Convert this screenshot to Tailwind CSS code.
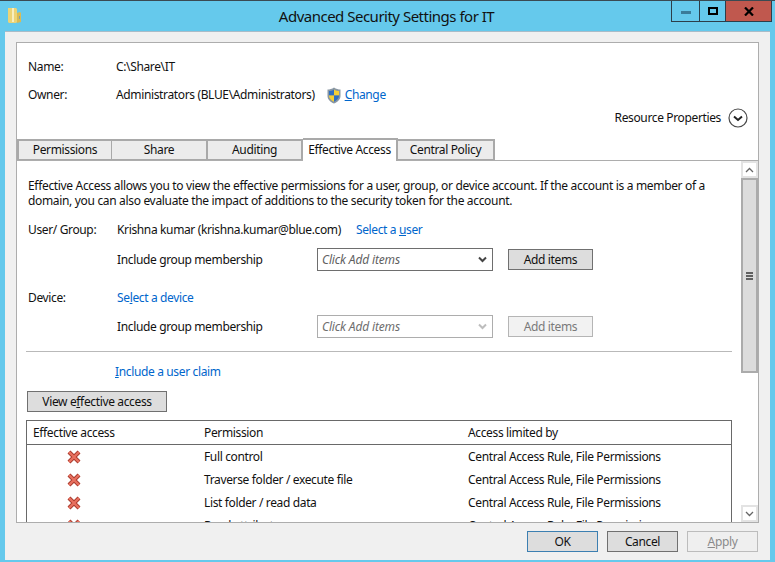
<!DOCTYPE html>
<html lang="en">
<head>
    <meta charset="UTF-8">
    <title>Advanced Security Settings for IT</title>
    <script src="https://cdn.jsdelivr.net/npm/@tailwindcss/browser@4"></script>
</head>
<body class="w-[775px] h-[562px] overflow-hidden bg-[#65c9ec] font-['Noto_Sans',sans-serif] text-[12px] leading-[16px] tracking-[-0.36px] text-[#111]">
    <!-- title bar -->
    <div class="h-[31px] border-t border-[#3a4a52] flex">
        <svg class="ml-[8px] mt-[6px]" width="14" height="17" viewBox="0 0 14 17">
            <path d="M0 1h8l1 1v13l-1 1H1l-1-1z" fill="#ecd477"/>
            <path d="M4 1h2v14H4z" fill="#f8efc0"/>
            <path d="M9 6l3-1 1 1v9l-4 1z" fill="#d9bb55"/>
            <path d="M11 9h1v3h-1z" fill="#7fa3ae"/>
        </svg>
        <div class="flex-1 pl-[80px] text-center text-[15px] leading-[31px] tracking-[-0.5px] text-[#111]">Advanced Security Settings for IT</div>
        <div class="flex h-[21px] border border-t-0 border-[#2c3e4a] mr-[3px]">
            <div class="w-[28px] flex items-center justify-center border-r border-[#2c3e4a]"><div class="w-[10px] h-[3px] mt-[3px] bg-[#3a7c9a]"></div></div>
            <div class="w-[25px] flex items-center justify-center"><div class="w-[10px] h-[8px] border-2 border-black"></div></div>
            <div class="w-[46px] flex items-center justify-center bg-[#c0584e] border-l border-[#2c3e4a]">
                <svg width="10" height="9" viewBox="0 0 10 9"><path d="M1 0.5l8 8M9 0.5l-8 8" stroke="#000" stroke-width="2.2" fill="none"/></svg>
            </div>
        </div>
    </div>

    <!-- client area -->
    <div class="ml-[5px] w-[765px] h-[529px] bg-[#f0f0f0] border-t border-[#a9bcc8] pt-[10px] pl-[11px] flex flex-col">
        <div class="w-[743px] h-[481px] bg-white border border-[#adadad] flex flex-col overflow-hidden">
            <!-- header -->
            <div class="h-[95px] shrink-0">
                <div class="flex h-[16px] mt-[16px] pl-[11px]"><span class="w-[88px]">Name:</span><span>C:\Share\IT</span></div>
                <div class="flex items-center h-[16px] mt-[12px] pl-[11px]">
                    <span class="w-[88px]">Owner:</span><span>Administrators (BLUE\Administrators)</span>
                    <svg class="ml-[11px] mr-[3px]" width="16" height="17" viewBox="0 0 16 17">
                        <path d="M8 0.5C6 2 3.500 2.500 1.500 2.500V9c0 3.500 3 6 6.500 7.500 3.500-1.500 6.500-4 6.500-7.500V2.500C12.500 2.500 10 2 8 0.500z" fill="#8a97a3"/>
                        <path d="M8 2.500C6.500 3.500 4.500 4 3 4v4.500h5z" fill="#2f6fc0"/>
                        <path d="M8 2.500C9.500 3.500 11.500 4 13 4v4.500H8z" fill="#f5d033"/>
                        <path d="M3 8.500h5v6.300C5.500 13.500 3 11.500 3 9z" fill="#f5d033"/>
                        <path d="M8 8.500h5V9c0 2.500-2.500 4.500-5 5.800z" fill="#2f6fc0"/>
                    </svg>
                    <span class="text-[#0066cc]"><span class="underline">C</span>hange</span>
                </div>
                <div class="flex items-center justify-end h-[20px] mt-[5px] pr-[10px]">
                    <span>Resource Properties</span>
                    <svg class="ml-[7px]" width="20" height="20" viewBox="0 0 20 20">
                        <circle cx="10" cy="10" r="9" fill="#fff" stroke="#4a4a4a" stroke-width="1.2"/>
                        <path d="M6 8.500l4 3.500 4-3.500" fill="none" stroke="#222" stroke-width="2"/>
                    </svg>
                </div>
            </div>

            <!-- tabs -->
            <div class="flex h-[22px] shrink-0 items-end relative z-10 text-center">
                <div class="w-[96px] h-[21px] border-2 border-b border-[#a9a9a9] bg-[#ececec] leading-[18px]">Permissions</div>
                <div class="w-[96px] h-[21px] -ml-[1px] border-2 border-b border-l-0 border-[#a9a9a9] bg-[#ececec] leading-[18px]">Share</div>
                <div class="w-[95px] h-[21px] border-2 border-b border-l-0 border-[#a9a9a9] bg-[#ececec] leading-[18px]">Auditing</div>
                <div class="w-[95px] h-[23px] border-2 border-b-0 border-l-0 border-[#a9a9a9] bg-white leading-[20px] -mb-px">Effective Access</div>
                <div class="w-[97px] h-[21px] border-2 border-b border-l-0 border-[#a9a9a9] bg-[#ececec] leading-[18px]">Central Policy</div>
            </div>

            <!-- tab page -->
            <div class="flex-1 min-h-0 flex border-t border-[#adadad]">
                <div class="w-[724px] overflow-hidden">
                    <p class="pl-[11px] pt-[17px] leading-[15px] tracking-[-0.33px]">Effective Access allows you to view the effective permissions for a user, group, or device account. If the account is a member of a<br>domain, you can also evaluate the impact of additions to the security token for the account.</p>

                    <div class="flex h-[16px] mt-[14px] pl-[11px]">
                        <span class="w-[89px]">User/ Group:</span>
                        <span>Krishna kumar (krishna.kumar@blue.com)</span>
                        <span class="ml-[15px] text-[#0066cc]">Select a <span class="underline">u</span>ser</span>
                    </div>
                    <div class="flex items-center h-[23px] mt-[10px] pl-[100px]">
                        <span class="w-[200px]">Include group membership</span>
                        <div class="w-[176px] h-[23px] border border-[#6e6e6e] bg-white flex items-center justify-between pl-[4px] pr-[5px]">
                            <span class="italic tracking-[-0.15px] text-[#5f5f5f]">Click Add items</span>
                            <svg width="9" height="7" viewBox="0 0 9 7"><path d="M1 1.500l3.500 3.500 3.500-3.500" fill="none" stroke="#444" stroke-width="2"/></svg>
                        </div>
                        <div class="ml-[15px] w-[85px] h-[21px] border border-[#707070] bg-[#dddddd] text-center leading-[19px]">Add items</div>
                    </div>

                    <div class="flex h-[16px] mt-[19px] pl-[11px]">
                        <span class="w-[89px]">Device:</span>
                        <span class="text-[#0066cc]">Se<span class="underline">l</span>ect a device</span>
                    </div>
                    <div class="flex items-center h-[23px] mt-[9px] pl-[100px]">
                        <span class="w-[200px]">Include group membership</span>
                        <div class="w-[176px] h-[23px] border border-[#adadad] bg-white flex items-center justify-between pl-[4px] pr-[5px]">
                            <span class="italic tracking-[-0.15px] text-[#6d6d6d]">Click Add items</span>
                            <svg width="9" height="7" viewBox="0 0 9 7"><path d="M1 1.500l3.500 3.500 3.500-3.500" fill="none" stroke="#bdbdbd" stroke-width="2"/></svg>
                        </div>
                        <div class="ml-[15px] w-[85px] h-[21px] border border-[#b5b5b5] bg-[#f2f2f2] text-center leading-[19px] text-[#7a7a7a]">Add items</div>
                    </div>

                    <div class="ml-[9px] w-[706px] h-px bg-[#b9b9b9] mt-[13px]"></div>

                    <div class="pl-[98px] mt-[12px] h-[16px] text-[#0066cc]"><span class="underline">I</span>nclude a user claim</div>

                    <div class="ml-[10px] mt-[11px] w-[140px] h-[21px] border border-[#707070] bg-[#dddddd] text-center leading-[19px]">View e<span class="underline">f</span>fective access</div>

                    <!-- results table -->
                    <div class="ml-[9px] mt-[8px] w-[706px] border border-[#696969]">
                        <div class="grid grid-cols-[171px_264px_1fr] h-[24px] items-center pl-[6px] border-b border-[#696969]">
                            <span>Effective access</span><span>Permission</span><span>Access limited by</span>
                        </div>
                        <div class="grid grid-cols-[171px_264px_1fr] h-[23px] items-center pl-[6px]">
                            <svg class="ml-[34px]" width="14" height="14" viewBox="0 0 14 14"><path d="M2 2l10 10M12 2L2 12" stroke="#a8392c" stroke-width="4.200" fill="none"/><path d="M2 2l10 10M12 2L2 12" stroke="#e8705f" stroke-width="2.400" fill="none"/></svg>
                            <span>Full control</span><span>Central Access Rule, File Permissions</span>
                        </div>
                        <div class="grid grid-cols-[171px_264px_1fr] h-[23px] items-center pl-[6px]">
                            <svg class="ml-[34px]" width="14" height="14" viewBox="0 0 14 14"><path d="M2 2l10 10M12 2L2 12" stroke="#a8392c" stroke-width="4.200" fill="none"/><path d="M2 2l10 10M12 2L2 12" stroke="#e8705f" stroke-width="2.400" fill="none"/></svg>
                            <span>Traverse folder / execute file</span><span>Central Access Rule, File Permissions</span>
                        </div>
                        <div class="grid grid-cols-[171px_264px_1fr] h-[23px] items-center pl-[6px]">
                            <svg class="ml-[34px]" width="14" height="14" viewBox="0 0 14 14"><path d="M2 2l10 10M12 2L2 12" stroke="#a8392c" stroke-width="4.200" fill="none"/><path d="M2 2l10 10M12 2L2 12" stroke="#e8705f" stroke-width="2.400" fill="none"/></svg>
                            <span>List folder / read data</span><span>Central Access Rule, File Permissions</span>
                        </div>
                        <div class="grid grid-cols-[171px_264px_1fr] h-[23px] items-center pl-[6px]">
                            <svg class="ml-[34px]" width="14" height="14" viewBox="0 0 14 14"><path d="M2 2l10 10M12 2L2 12" stroke="#a8392c" stroke-width="4.200" fill="none"/><path d="M2 2l10 10M12 2L2 12" stroke="#e8705f" stroke-width="2.400" fill="none"/></svg>
                            <span>Read attributes</span><span>Central Access Rule, File Permissions</span>
                        </div>
                    </div>
                </div>

                <!-- scrollbar -->
                <div class="w-[17px] flex flex-col bg-white">
                    <div class="h-[17px] border-2 border-[#e3e3e3] flex items-center justify-center"><svg width="9" height="6" viewBox="0 0 9 6"><path d="M1 5l3.500-3.500L8 5" fill="none" stroke="#666" stroke-width="1.300"/></svg></div>
                    <div class="h-[195px] bg-[#dcdcdc] border-2 border-[#ababab] flex items-center justify-center"><div class="w-[7px] h-[8px] border-y-2 border-[#606060] flex items-center"><div class="w-full h-[2px] bg-[#606060]"></div></div></div>
                    <div class="flex-1"></div>
                    <div class="h-[17px] border-2 border-[#e3e3e3] flex items-center justify-center"><svg width="9" height="6" viewBox="0 0 9 6"><path d="M1 1l3.500 3.500L8 1" fill="none" stroke="#666" stroke-width="1.300"/></svg></div>
                </div>
            </div>
        </div>

        <!-- dialog buttons -->
        <div class="flex justify-end gap-[9px] w-[742px] mt-[8px] text-center">
            <div class="w-[71px] h-[21px] border border-[#3c7fb1] bg-[#dddddd] leading-[19px]">OK</div>
            <div class="w-[71px] h-[21px] border border-[#707070] bg-[#dddddd] leading-[19px]">Cancel</div>
            <div class="w-[71px] h-[21px] border border-[#bcbcbc] bg-[#efefef] leading-[19px] text-[#8a8a8a]"><span class="underline">A</span>pply</div>
        </div>
    </div>
</body>
</html>
